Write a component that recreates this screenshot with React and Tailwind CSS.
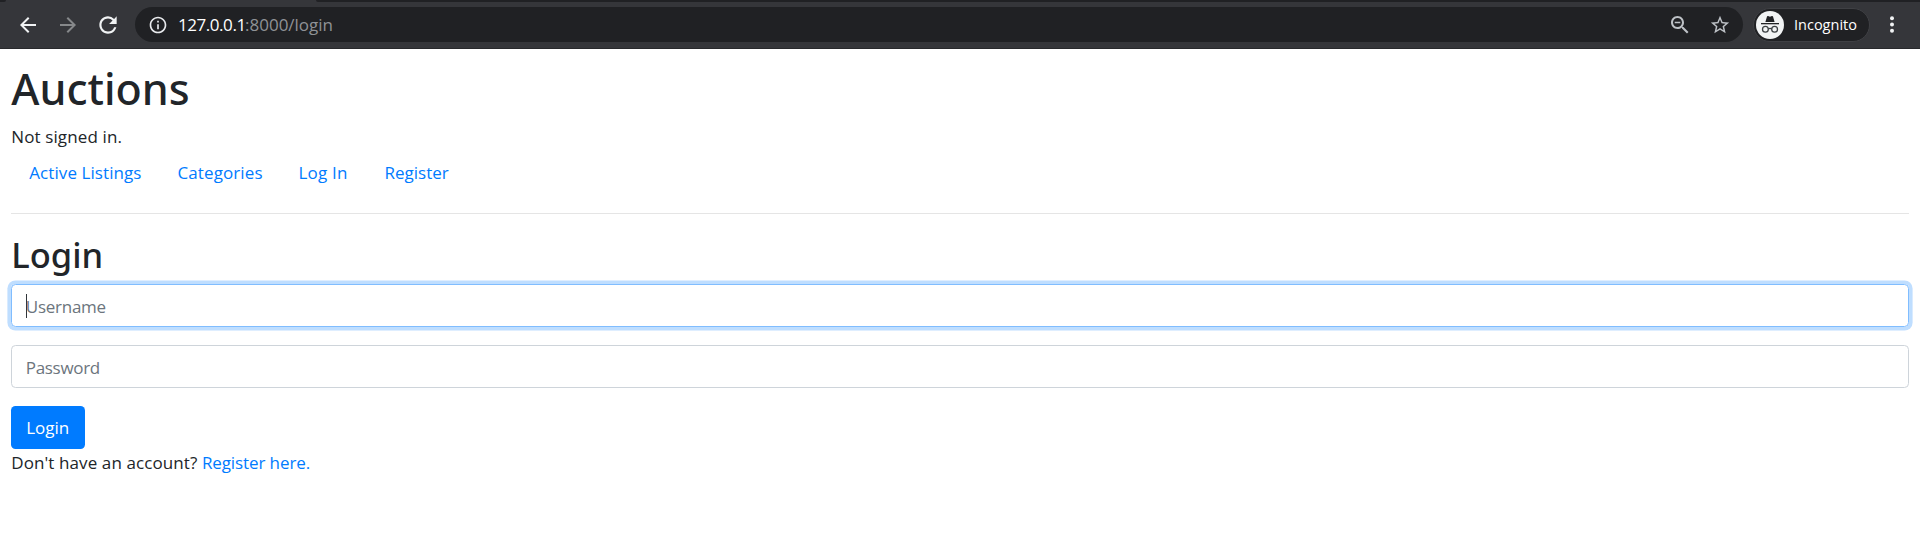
function Icon({ d, className }) {
  return (
    <svg viewBox="0 0 24 24" fill="currentColor" className={className} aria-hidden="true">
      <path d={d} />
    </svg>
  );
}

const ICONS = {
  back: "M20 11H7.83l5.59-5.59L12 4l-8 8 8 8 1.41-1.41L7.83 13H20v-2z",
  forward: "M12 4l-1.41 1.41L16.17 11H4v2h12.17l-5.58 5.59L12 20l8-8z",
  reload:
    "M17.65 6.35A7.96 7.96 0 0 0 12 4c-4.42 0-7.99 3.58-7.99 8s3.57 8 7.99 8c3.73 0 6.84-2.55 7.73-6h-2.08A5.99 5.99 0 0 1 12 18c-3.31 0-6-2.69-6-6s2.69-6 6-6c1.66 0 3.14.69 4.22 1.78L13 11h7V4l-2.35 2.35z",
  info: "M11 17h2v-6h-2v6zm0-8h2V7h-2v2zm1-7C6.48 2 2 6.48 2 12s4.48 10 10 10 10-4.48 10-10S17.52 2 12 2zm0 18c-4.41 0-8-3.59-8-8s3.59-8 8-8 8 3.59 8 8-3.59 8-8 8z",
  zoomOut:
    "M15.5 14h-.79l-.28-.27C15.41 12.59 16 11.11 16 9.5 16 5.91 13.09 3 9.5 3S3 5.91 3 9.5 5.91 16 9.5 16c1.61 0 3.09-.59 4.23-1.57l.27.28v.79l5 4.99L20.49 19l-4.99-5zm-6 0C7.01 14 5 11.99 5 9.5S7.01 5 9.5 5 14 7.01 14 9.5 11.99 14 9.5 14zM6.7 8.8h5.6v1.4H6.7z",
  star: "M22 9.24l-7.19-.62L12 2 9.19 8.63 2 9.24l5.46 4.73L5.82 21 12 17.27 18.18 21l-1.63-7.03L22 9.24zM12 15.4l-3.76 2.27 1-4.28-3.32-2.88 4.38-.38L12 6.1l1.71 4.04 4.38.38-3.32 2.88 1 4.28L12 15.4z",
};

function IncognitoAvatar() {
  return (
    <svg viewBox="0 0 28 28" className="size-7 shrink-0" aria-hidden="true">
      <circle cx="14" cy="14" r="14" fill="#f1f3f4" />
      <path d="M9.4 11 11 5.6c.2-.5.6-.7 1.1-.5L14 5.7l1.9-.6c.5-.2.9 0 1.1.5L18.6 11z" fill="#202124" />
      <path d="M5 12h18v1.3H5z" fill="#202124" />
      <g fill="none" stroke="#3c4043" strokeWidth="1.3">
        <circle cx="9.4" cy="18.2" r="2.9" />
        <circle cx="18.6" cy="18.2" r="2.9" />
        <path d="M12.3 18c1-.8 2.400-.8 3.400 0" />
      </g>
    </svg>
  );
}

function BrowserBar() {
  return (
    <header className="flex h-[49px] flex-col bg-[#35363a]">
      <div className="flex h-0.5 justify-between">
        <div className="w-1.5 rounded-br-sm bg-[#202124]" />
        <div className="w-[1604px] rounded-bl-sm bg-[#202124]" />
      </div>
      <div className="flex h-[45px] items-center pl-4">
        <Icon d={ICONS.back} className="size-6 text-[#f1f3f4]" />
        <Icon d={ICONS.forward} className="ml-4 size-6 text-[#86888a]" />
        <Icon d={ICONS.reload} className="ml-[15px] size-[26px] text-[#f1f3f4]" />
        <div className="ml-[14px] flex h-[35px] w-[1608px] items-center rounded-full bg-[#202124] pl-[13px] pr-3">
          <Icon d={ICONS.info} className="size-5 text-[#e8eaed]" />
          <div className="ml-2.5 flex grow whitespace-nowrap text-[17px] leading-6">
            <span className="w-[67px] tracking-[-0.45px] text-white">127.0.0.1</span>
            <span className="text-[#8f9296]">:8000/login</span>
          </div>
          <Icon d={ICONS.zoomOut} className="size-6 text-[#bdc1c6]" />
          <Icon d={ICONS.star} className="ml-[17px] size-[22px] text-[#bdc1c6]" />
        </div>
        <div className="ml-[10px] flex h-[34px] w-[117px] items-center rounded-full border border-[#3f4044] bg-[#202124] pl-0.5">
          <IncognitoAvatar />
          <span className="ml-2.5 text-[14.5px] leading-5 text-white">Incognito</span>
        </div>
        <svg viewBox="0 0 4 17" className="ml-5 h-[17px] w-1" fill="#f1f3f4" aria-hidden="true">
          <circle cx="2" cy="2.2" r="2" />
          <circle cx="2" cy="8.5" r="2" />
          <circle cx="2" cy="14.8" r="2" />
        </svg>
      </div>
      <div className="mt-px h-px bg-[#28292c]" />
    </header>
  );
}

export default function App() {
  return (
    <div className="min-h-[547px] w-full overflow-hidden bg-white font-['Open_Sans',sans-serif] text-[17px] text-[#212529]">
      <BrowserBar />
      <main className="px-[11.25px] pt-[13.25px]">
        <h1 className="mb-[7px] font-['Noto_Sans',sans-serif] text-[43px] font-medium leading-[54px]">Auctions</h1>
        <div className="leading-[27px] tracking-[0.12px]">Not signed in.</div>
        <nav className="flex whitespace-nowrap py-[9px] leading-[27px] text-[#007bff]">
          <a className="w-[148.25px] pl-[18px] tracking-[0.08px]">Active Listings</a>
          <a className="w-[121px] pl-[18px] tracking-[0.1px]">Categories</a>
          <a className="w-[86px] pl-[18px] tracking-[0.2px]">Log In</a>
          <a className="pl-[18px]">Register</a>
        </nav>
        <hr className="my-[18px] border-t border-[#e5e5e5]" />
        <h2 className="mb-2 pt-px font-['Noto_Sans',sans-serif] text-[34.5px] font-medium leading-[43px]">Login</h2>
        <form>
          <div className="mb-[18px] flex h-[43px] items-center rounded-[4.5px] border border-[#80bdff] px-[13.5px] tracking-[-0.25px] text-[#6c757d] shadow-[0_0_0_3.6px_rgba(0,123,255,0.25)]">
            <span className="-mr-px h-6 w-px bg-[#30353a]" />
            <span className="pt-0.5">Username</span>
          </div>
          <div className="mb-[18px] flex h-[43px] items-center rounded-[4.5px] border border-[#ced4da] px-[13.5px] pt-0.5 tracking-[-0.3px] text-[#6c757d]">
            Password
          </div>
          <button type="button" className="block h-[43px] w-[74px] rounded-[4.5px] bg-[#007bff] pr-px text-center text-white">
            Login
          </button>
        </form>
        <div className="leading-[27px]">
          <span className="tracking-[0.1px]">Don't have an account?</span>{" "}
          <a className="tracking-[-0.1px] text-[#007bff]">Register here.</a>
        </div>
      </main>
    </div>
  );
}
